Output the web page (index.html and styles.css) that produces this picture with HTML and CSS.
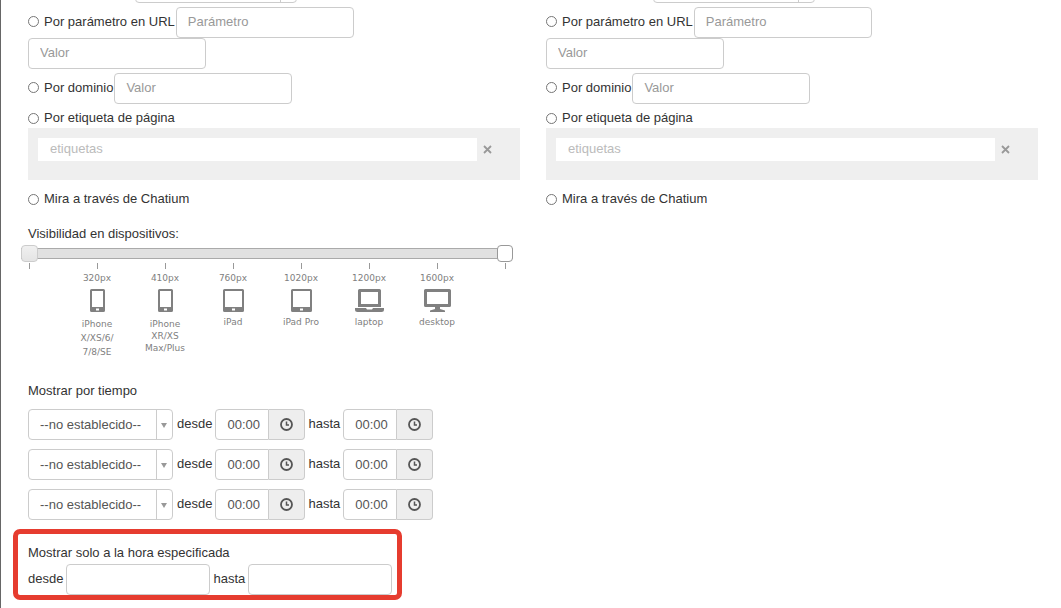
FILE: index.html
```html
<!DOCTYPE html>
<html lang="es">
  <head>
    <meta charset="UTF-8" />
    <meta name="viewport" content="width=device-width, initial-scale=1.0" />
    <title>Visibilidad</title>
    <link rel="stylesheet" href="styles.css">
  </head>
  <body>
    <!-- Shared icons -->
    <svg class="sprite" aria-hidden="true">
      <symbol id="close" viewBox="0 0 9 9">
        <path d="M1 1l7 7M8 1l-7 7" fill="none" stroke="currentColor" stroke-width="1.8" />
      </symbol>
      <symbol id="clock" viewBox="0 0 13 13">
        <circle cx="6.5" cy="6.5" r="5.5" fill="none" stroke="currentColor" stroke-width="1.8" />
        <path d="M6.500 3.500v3.500H9" fill="none" stroke="currentColor" stroke-width="1.5" />
      </symbol>
      <symbol id="phone" viewBox="0 0 15 23">
        <path fill-rule="evenodd" d="M1.500 0h12A1.500 1.500 0 0 1 15 1.500v20a1.500 1.500 0 0 1-1.500 1.500h-12A1.500 1.500 0 0 1 0 21.500v-20A1.500 1.500 0 0 1 1.500 0zM2 2v16h11V2zM6 19.500v2h3v-2z" />
      </symbol>
      <symbol id="tablet" viewBox="0 0 21 23">
        <path fill-rule="evenodd" d="M1.500 0h18A1.500 1.500 0 0 1 21 1.500v20a1.500 1.500 0 0 1-1.500 1.500h-18A1.500 1.500 0 0 1 0 21.500v-20A1.500 1.500 0 0 1 1.500 0zM2 2v16h17V2zM9 19.500v2h3v-2z" />
      </symbol>
      <symbol id="laptop" viewBox="0 0 29 23">
        <path fill-rule="evenodd" d="M4.500 0h20A1.500 1.500 0 0 1 26 1.500V18H3V1.500A1.500 1.500 0 0 1 4.500 0zM6 3v12h17V3z" />
        <path d="M0 19h11l1 1.500h5l1-1.500h11v1.500a2.500 2.500 0 0 1-2.500 2.500h-24A2.500 2.500 0 0 1 0 20.500z" />
      </symbol>
      <symbol id="desktop" viewBox="0 0 27 23">
        <path fill-rule="evenodd" d="M1.500 0h24A1.500 1.500 0 0 1 27 1.500v15a1.500 1.500 0 0 1-1.500 1.500h-24A1.500 1.500 0 0 1 0 16.500v-15A1.500 1.500 0 0 1 1.500 0zM3 3v12h21V3z" />
        <path d="M11 18h5v2l5 1.500V23H6v-1.500l5-1.500z" />
      </symbol>
    </svg>

    <main class="columns">
      <section>
        <div class="row top">
          <span class="select short"><select aria-label="Condición"></select></span>
        </div>
        <div class="row">
          <label class="option"><input type="radio" name="show" /> Por parámetro en URL</label>
          <input class="field" type="text" placeholder="Parámetro" aria-label="Parámetro" />
          <input class="field" type="text" placeholder="Valor" aria-label="Valor" />
        </div>
        <div class="row">
          <label class="option"><input type="radio" name="show" /> Por dominio</label>
          <input class="field" type="text" placeholder="Valor" aria-label="Dominio" />
        </div>
        <div class="row plain">
          <label class="option"><input type="radio" name="show" /> Por etiqueta de página</label>
        </div>
        <div class="tags">
          <input type="text" placeholder="etiquetas" aria-label="Etiquetas" />
          <button type="button" aria-label="Quitar"><svg width="9" height="9"><use href="#close" /></svg></button>
        </div>
        <div class="row">
          <label class="option"><input type="radio" name="show" /> Mira a través de Chatium</label>
        </div>

        <!-- Device range -->
        <h2 class="devices-title">Visibilidad en dispositivos:</h2>
        <div class="slider">
          <input class="from" type="range" min="0" max="7" value="0" aria-label="Desde" />
          <input type="range" min="0" max="7" value="7" aria-label="Hasta" />
        </div>
        <ul class="scale">
          <li></li>
          <li>320px <svg width="15" height="23"><use href="#phone" /></svg><span class="tall">iPhone X/XS/6/ 7/8/SE</span></li>
          <li>410px <svg width="15" height="23"><use href="#phone" /></svg><span class="lower">iPhone XR/XS Max/Plus</span></li>
          <li>760px <svg width="21" height="23"><use href="#tablet" /></svg><span>iPad</span></li>
          <li>1020px <svg width="21" height="23"><use href="#tablet" /></svg><span>iPad Pro</span></li>
          <li>1200px <svg width="29" height="23"><use href="#laptop" /></svg><span>laptop</span></li>
          <li>1600px <svg width="27" height="23"><use href="#desktop" /></svg><span>desktop</span></li>
          <li></li>
        </ul>

        <!-- Time ranges -->
        <h2 class="time-title">Mostrar por tiempo</h2>
        <div class="times">
          <div class="time-row">
            <span class="select"><select aria-label="Día"><option>--no establecido--</option></select></span>
            <label for="from1">desde</label>
            <span class="time"><input id="from1" type="text" value="00:00" /><button type="button" aria-label="Elegir hora"><svg width="13" height="13"><use href="#clock" /></svg></button></span>
            <label for="to1">hasta</label>
            <span class="time"><input id="to1" type="text" value="00:00" /><button type="button" aria-label="Elegir hora"><svg width="13" height="13"><use href="#clock" /></svg></button></span>
          </div>
          <div class="time-row">
            <span class="select"><select aria-label="Día"><option>--no establecido--</option></select></span>
            <label for="from2">desde</label>
            <span class="time"><input id="from2" type="text" value="00:00" /><button type="button" aria-label="Elegir hora"><svg width="13" height="13"><use href="#clock" /></svg></button></span>
            <label for="to2">hasta</label>
            <span class="time"><input id="to2" type="text" value="00:00" /><button type="button" aria-label="Elegir hora"><svg width="13" height="13"><use href="#clock" /></svg></button></span>
          </div>
          <div class="time-row">
            <span class="select"><select aria-label="Día"><option>--no establecido--</option></select></span>
            <label for="from3">desde</label>
            <span class="time"><input id="from3" type="text" value="00:00" /><button type="button" aria-label="Elegir hora"><svg width="13" height="13"><use href="#clock" /></svg></button></span>
            <label for="to3">hasta</label>
            <span class="time"><input id="to3" type="text" value="00:00" /><button type="button" aria-label="Elegir hora"><svg width="13" height="13"><use href="#clock" /></svg></button></span>
          </div>
        </div>

        <div class="highlight">
          <h2>Mostrar solo a la hora especificada</h2>
          <div class="time-row">
            <label for="fromHour">desde</label>
            <input class="field hour" id="fromHour" type="text" />
            <label for="toHour">hasta</label>
            <input class="field hour" id="toHour" type="text" />
          </div>
        </div>
      </section>

      <section>
        <div class="row top">
          <span class="select short"><select aria-label="Condición"></select></span>
        </div>
        <div class="row">
          <label class="option"><input type="radio" name="hide" /> Por parámetro en URL</label>
          <input class="field" type="text" placeholder="Parámetro" aria-label="Parámetro" />
          <input class="field" type="text" placeholder="Valor" aria-label="Valor" />
        </div>
        <div class="row">
          <label class="option"><input type="radio" name="hide" /> Por dominio</label>
          <input class="field" type="text" placeholder="Valor" aria-label="Dominio" />
        </div>
        <div class="row plain">
          <label class="option"><input type="radio" name="hide" /> Por etiqueta de página</label>
        </div>
        <div class="tags">
          <input type="text" placeholder="etiquetas" aria-label="Etiquetas" />
          <button type="button" aria-label="Quitar"><svg width="9" height="9"><use href="#close" /></svg></button>
        </div>
        <div class="row">
          <label class="option"><input type="radio" name="hide" /> Mira a través de Chatium</label>
        </div>
      </section>
    </main>
  </body>
</html>
```

FILE: styles.css
```css
* {
  box-sizing: border-box;
}
html {
  overflow: hidden;
}
body {
  margin: 0;
  min-height: 100vh;
  padding: 0 23px 0 27px;
  border-left: 1px solid #666;
  background: #fff;
  color: #333;
  font-family: "Liberation Sans", Arial, sans-serif;
  font-size: 13px;
  line-height: 18px;
}
input,
select,
button {
  margin: 0;
  font: inherit;
  color: #555;
}
h2 {
  margin: 0;
  font-size: 13px;
  font-weight: normal;
}
.sprite {
  display: none;
}
.columns {
  display: grid;
  grid-template-columns: 1fr 1fr;
  gap: 26px;
  margin-top: -28px;
}
section {
  min-width: 0;
}

/* Options */
.row {
  display: flex;
  flex-wrap: wrap;
  align-items: center;
  column-gap: 1px;
  margin-bottom: 4px;
}
.top {
  padding-left: 107px;
}
.plain {
  margin: 5px 0 1px;
}
.option {
  display: flex;
  align-items: center;
  gap: 5px;
  padding-bottom: 2px;
}
.plain .option {
  padding-bottom: 0;
}
.option input {
  appearance: none;
  width: 11px;
  height: 11px;
  border: 1px solid #767676;
  border-radius: 50%;
  background: #fff;
}
.field {
  width: 178px;
  height: 31px;
  padding: 0 11px 2px;
  border: 1px solid #ccc;
  border-radius: 4px;
  background: #fff;
}
::placeholder {
  color: #999;
}
.tags {
  display: flex;
  align-items: flex-start;
  height: 52px;
  margin-bottom: 10px;
  padding: 10px 22px 0 10px;
  background: #efefef;
}
.tags input {
  flex: 1;
  min-width: 0;
  height: 23px;
  padding: 0 12px 2px;
  border: 0;
  background: #fff;
}
.tags input::placeholder {
  color: #bbb;
}
.tags button {
  display: flex;
  align-items: center;
  justify-content: center;
  width: 21px;
  height: 23px;
  padding: 0;
  border: 0;
  background: none;
  color: #999;
}

/* Device range */
.devices-title {
  margin-top: 15px;
}
.slider {
  display: grid;
  align-items: center;
  height: 17px;
  margin: 2px 7px 0 -7px;
  background: linear-gradient(#aaa, #aaa) 0 3px / 100% 1px no-repeat,
    linear-gradient(#aaa, #aaa) 0 13px / 100% 1px no-repeat,
    linear-gradient(#e1e1e1, #e1e1e1) 0 4px / 100% 9px no-repeat;
}
.slider input {
  appearance: none;
  grid-area: 1 / 1;
  width: 100%;
  height: 17px;
  background: none;
  pointer-events: none;
}
.slider input::-webkit-slider-thumb {
  appearance: none;
  width: 16px;
  height: 17px;
  border: 1px solid #999;
  border-radius: 4px;
  background: #fff;
  pointer-events: auto;
}
.slider .from::-webkit-slider-thumb {
  width: 17px;
  border-color: #ccc;
  background: linear-gradient(#f0f0f0, #e4e4e4);
}
.scale {
  display: grid;
  grid-template-columns: repeat(8, 1fr);
  height: 101px;
  margin: 1px -19px 0 -33px;
  padding: 0;
  list-style: none;
  color: #808080;
  fill: #808080;
  font-family: "DejaVu Sans", sans-serif;
  font-size: 9px;
  line-height: 12px;
  text-align: center;
}
.scale li {
  display: flex;
  flex-direction: column;
  align-items: center;
}
.scale li::before {
  content: "";
  width: 1px;
  height: 6px;
  margin-bottom: 3px;
  background: #999;
}
.scale svg {
  margin: 5px 0 4px;
}
.scale span {
  width: 42px;
}
.scale .tall {
  margin-top: 1px;
  line-height: 14px;
}
.scale .lower {
  margin-top: 2px;
}

/* Time ranges */
.time-title {
  margin-top: 18px;
}
.times {
  display: grid;
  gap: 9px;
  margin-top: 9px;
}
.time-row {
  display: flex;
  align-items: center;
}
.select {
  position: relative;
  width: 145px;
}
.select select {
  appearance: none;
  display: block;
  width: 100%;
  height: 31px;
  padding: 0 18px 0 11px;
  border: 1px solid #ccc;
  border-radius: 4px;
  background: linear-gradient(#ccc, #ccc) right 15px top / 1px 100% no-repeat #fff;
}
.select::after {
  content: "";
  position: absolute;
  top: 14px;
  right: 6px;
  border: 3px solid transparent;
  border-top: 5px solid #999;
  border-bottom: 0;
  pointer-events: none;
}
.short {
  width: 162px;
}
.time-row label {
  margin: 0 3px;
  padding-bottom: 2px;
}
.time-row .select + label {
  margin-left: 4px;
}
.time {
  display: flex;
  width: 90px;
}
.time input {
  width: 54px;
  height: 31px;
  padding: 0 0 0 11px;
  border: 1px solid #ccc;
  border-radius: 4px 0 0 4px;
  background: #fff;
}
.time button {
  display: flex;
  flex: 1;
  align-items: center;
  justify-content: center;
  padding: 0;
  border: 1px solid #ccc;
  border-left: 0;
  border-radius: 0 4px 4px 0;
  background: #eee;
}

/* Exact hours */
.highlight {
  width: fit-content;
  margin: 9px 0 0 -15px;
  padding: 10px 5px 0 10px;
  border: 5px solid #e63c2f;
  border-radius: 7px;
}
.highlight h2 {
  margin-bottom: 2px;
}
.highlight label:first-child {
  margin-left: 0;
}
.hour {
  width: 144px;
}
```
